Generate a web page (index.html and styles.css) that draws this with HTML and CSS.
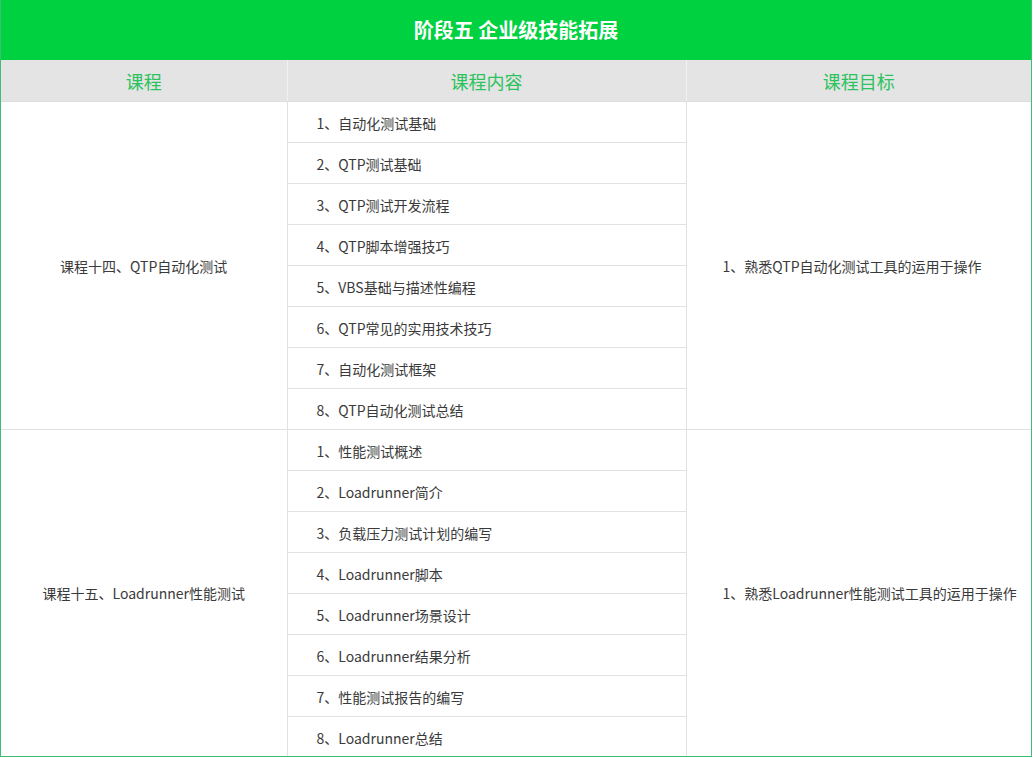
FILE: index.html
```html
<!DOCTYPE html>
<html lang="zh">
<head>
<meta charset="utf-8">
<link rel="stylesheet" href="styles.css">
</head>
<body>
<div class="stage">
  <div class="stage-title">阶段五 企业级技能拓展</div>
  <table class="course-table">
    <colgroup>
      <col class="c1"><col class="c2"><col class="c3">
    </colgroup>
    <thead>
      <tr><th>课程</th><th>课程内容</th><th>课程目标</th></tr>
    </thead>
    <tbody>
      <tr><td rowspan="8" class="name">课程十四、QTP自动化测试</td><td class="item">1、自动化测试基础</td><td rowspan="8" class="goal">1、熟悉QTP自动化测试工具的运用于操作</td></tr>
      <tr><td class="item">2、QTP测试基础</td></tr>
      <tr><td class="item">3、QTP测试开发流程</td></tr>
      <tr><td class="item">4、QTP脚本增强技巧</td></tr>
      <tr><td class="item">5、VBS基础与描述性编程</td></tr>
      <tr><td class="item">6、QTP常见的实用技术技巧</td></tr>
      <tr><td class="item">7、自动化测试框架</td></tr>
      <tr><td class="item">8、QTP自动化测试总结</td></tr>
      <tr><td rowspan="8" class="name">课程十五、Loadrunner性能测试</td><td class="item">1、性能测试概述</td><td rowspan="8" class="goal">1、熟悉Loadrunner性能测试工具的运用于操作</td></tr>
      <tr><td class="item">2、Loadrunner简介</td></tr>
      <tr><td class="item">3、负载压力测试计划的编写</td></tr>
      <tr><td class="item">4、Loadrunner脚本</td></tr>
      <tr><td class="item">5、Loadrunner场景设计</td></tr>
      <tr><td class="item">6、Loadrunner结果分析</td></tr>
      <tr><td class="item">7、性能测试报告的编写</td></tr>
      <tr><td class="item">8、Loadrunner总结</td></tr>
    </tbody>
  </table>
</div>
</body>
</html>
```
FILE: styles.css
```css
html, body {
  margin: 0;
  padding: 0;
  background: #fff;
}
body {
  font-family: "Noto Sans CJK SC", "Noto Sans", sans-serif;
  color: #3a3a3a;
}
.stage {
  width: 1030px;
  height: 756px;
  border: 1px solid #3fbf74;
  border-top: none;
  overflow: hidden;
}
.stage-title {
  height: 60px;
  margin: 0 -1px;
  background: #00d140;
  color: #fff;
  font-size: 20px;
  font-weight: bold;
  line-height: 60px;
  text-align: center;
}
.course-table {
  width: 100%;
  border-collapse: collapse;
  table-layout: fixed;
}
.c1 { width: 286px; }
.c2 { width: 399px; }
.c3 { width: auto; }
.course-table th {
  height: 41px;
  padding: 0;
  background: #e4e4e4;
  color: #2cc25e;
  font-size: 18px;
  font-weight: normal;
  border-left: 1px solid #f2f2f2;
  border-bottom: 1px solid #dedede;
}
.course-table th:first-child { border-left: none; }
.course-table td {
  height: 40px;
  padding: 0;
  font-size: 14px;
  border: 1px solid #e2e2e2;
  line-height: 20px;
}
.course-table td.name {
  text-align: center;
  border-left: none;
}
.course-table td.item {
  padding-left: 29px;
  padding-top: 1px;
  height: 39px;
}
.course-table td.goal {
  padding-left: 36px;
  border-right: none;
}
.course-table tbody tr:last-child td { border-bottom: none; }
```
